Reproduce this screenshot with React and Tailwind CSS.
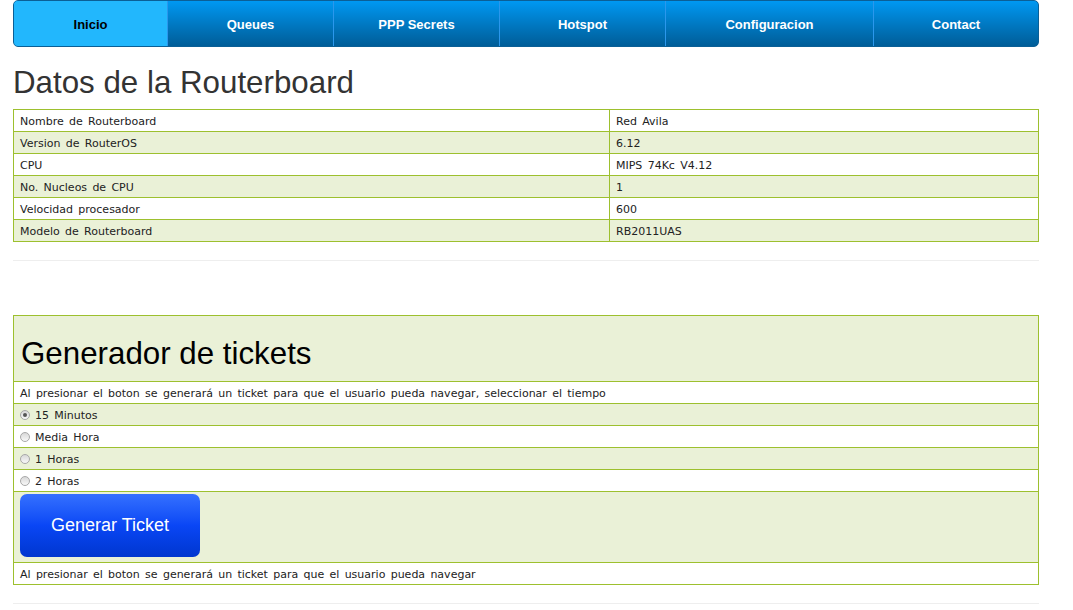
import React from "react";

const tabs = [
  { label: "Inicio", w: "w-[153px]", active: true },
  { label: "Queues", w: "w-[166px]" },
  { label: "PPP Secrets", w: "w-[166px]" },
  { label: "Hotspot", w: "w-[166px]" },
  { label: "Configuracion", w: "w-[208px]" },
  { label: "Contact", w: "flex-1" },
];

const rows = [
  ["Nombre de Routerboard", "Red Avila"],
  ["Version de RouterOS", "6.12"],
  ["CPU", "MIPS 74Kc V4.12"],
  ["No. Nucleos de CPU", "1"],
  ["Velocidad procesador", "600"],
  ["Modelo de Routerboard", "RB2011UAS"],
];

const body = "font-['DejaVu_Sans',sans-serif] text-[11px] [word-spacing:1.8px]";

function Radio({ checked }) {
  return (
    <span className="inline-flex w-[10px] h-[10px] rounded-full border border-[#a8a8a8] bg-gradient-to-b from-[#d8d8d8] to-[#f8f8f8] items-center justify-center mr-[5px] relative top-[-1px]">
      {checked && <span className="w-[4px] h-[4px] rounded-full bg-[#555]" />}
    </span>
  );
}

export default function App() {
  const opts = ["15 Minutos", "Media Hora", "1 Horas", "2 Horas"];
  return (
    <div className="bg-white min-h-[610px] w-[1073px] px-[13px] font-['Liberation_Sans',Arial,sans-serif] text-[#333]">
      <nav className="flex h-[47px] w-[1026px] rounded-[5px] border border-[#0b5f96] overflow-hidden bg-gradient-to-b from-[#0098f2] to-[#005d98]">
        {tabs.map((t, i) => (
          <div
            key={t.label}
            className={`${t.w} flex items-center justify-center pt-[2px] text-[13px] font-bold ${
              i > 0 ? "border-l border-[#2b97ec]" : ""
            } ${t.active ? "bg-[#22b7fd] text-black" : "text-white"}`}
          >
            {t.label}
          </div>
        ))}
      </nav>

      <h1 className="text-[31.3px] leading-none mt-[20px] mb-[11px] text-[#333] font-normal">
        Datos de la Routerboard
      </h1>

      <table className={`w-[1026px] border-collapse border border-[#9dc02e] ${body} text-[#222]`}>
        <tbody>
          {rows.map((r, i) => (
            <tr key={r[0]} className={i % 2 ? "bg-[#eaf1d7]" : "bg-white"}>
              <td className="border border-[#9dc02e] h-[22px] px-[6px] pt-[2px] pb-0 w-[596px]">{r[0]}</td>
              <td className="border border-[#9dc02e] h-[22px] px-[6px] pt-[2px] pb-0">{r[1]}</td>
            </tr>
          ))}
        </tbody>
      </table>

      <div className="mt-[18px] h-px w-[1026px] bg-[#eeeeee]" />

      <div className={`mt-[54px] w-[1026px] border border-[#9dc02e] ${body} text-[#222]`}>
        <div className="bg-[#eaf1d7] h-[66px] flex items-center px-[7px] border-b border-[#9dc02e]">
          <h2 className="text-[31.3px] leading-none text-black font-['Liberation_Sans',Arial,sans-serif] [word-spacing:0] mt-[9px]">
            Generador de tickets
          </h2>
        </div>
        <div className="h-[22px] flex items-center px-[6px] pt-[2px] bg-white border-b border-[#9dc02e]">
          Al presionar el boton se generará un ticket para que el usuario pueda navegar, seleccionar el tiempo
        </div>
        {opts.map((o, i) => (
          <div
            key={o}
            className={`h-[22px] flex items-center px-[6px] pt-[2px] border-b border-[#9dc02e] ${
              i % 2 === 0 ? "bg-[#eaf1d7]" : "bg-white"
            }`}
          >
            <Radio checked={i === 0} />
            {o}
          </div>
        ))}
        <div className="h-[71px] bg-[#eaf1d7] px-[6px] pt-[2px] border-b border-[#9dc02e] flex items-start">
          <button className="block w-[180px] h-[63px] rounded-[7px] bg-gradient-to-b from-[#3570ff] via-[#0a46f5] to-[#0036cf] text-white text-[18px] [word-spacing:0] font-['Liberation_Sans',Arial,sans-serif]">
            Generar Ticket
          </button>
        </div>
        <div className="h-[21px] flex items-center px-[6px] pt-[2px] bg-white">
          Al presionar el boton se generará un ticket para que el usuario pueda navegar
        </div>
      </div>

      <div className="mt-[18px] h-px w-[1026px] bg-[#eeeeee]" />
    </div>
  );
}
